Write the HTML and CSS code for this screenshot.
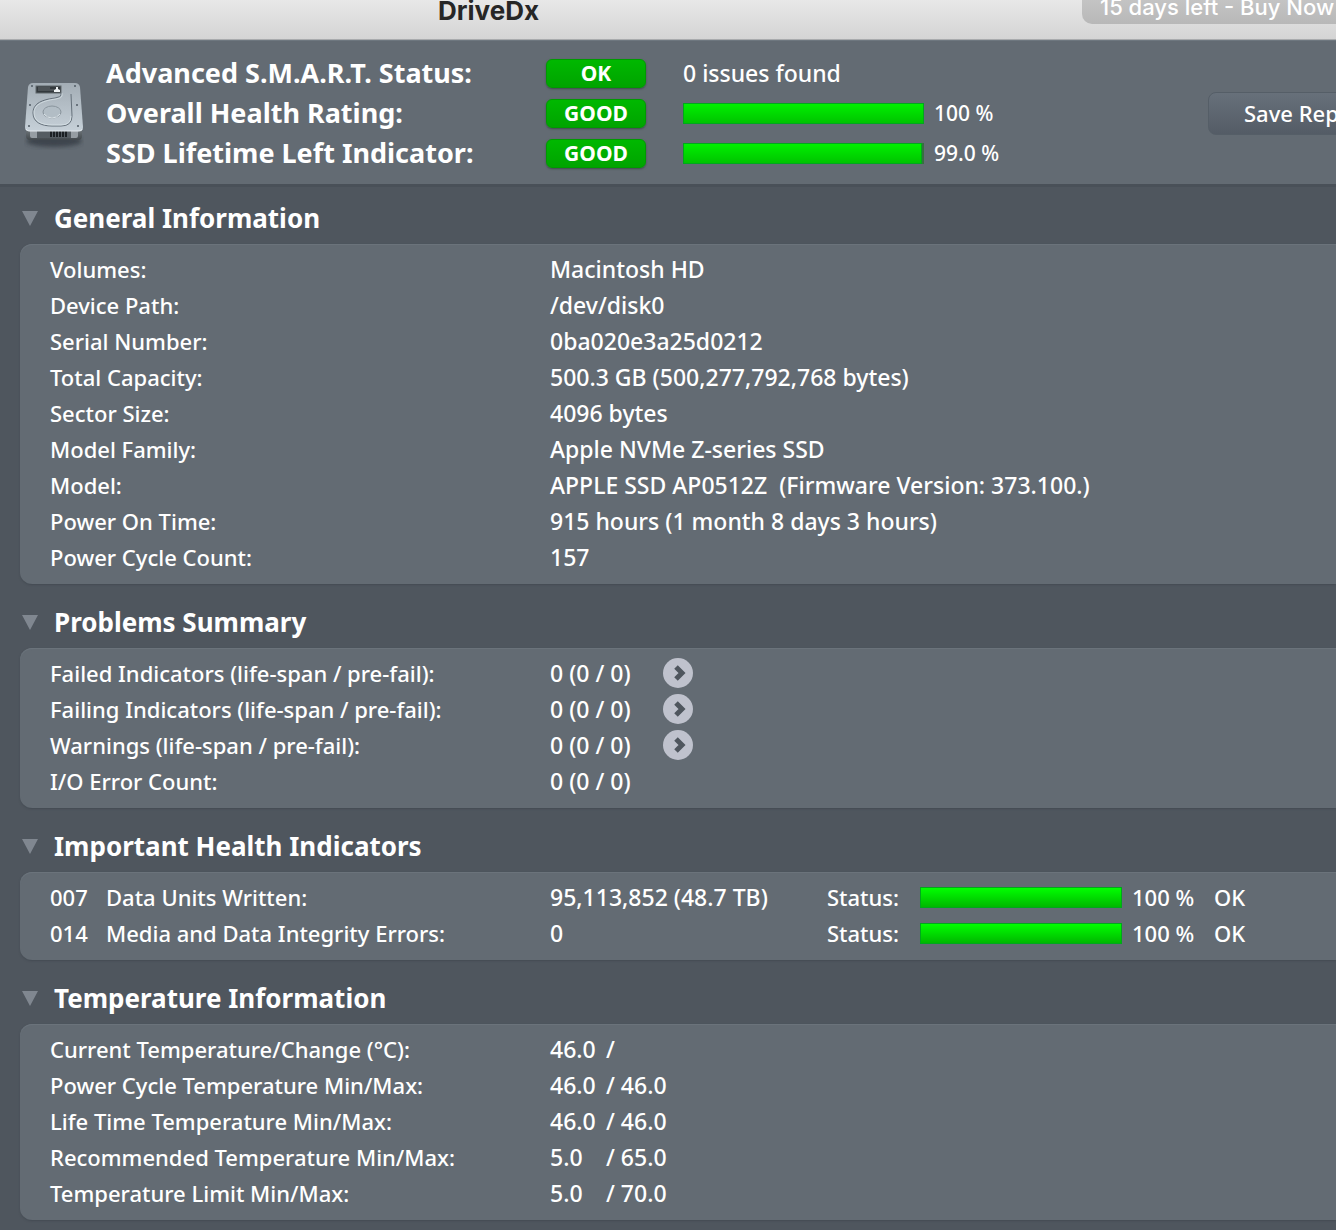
FILE: index.html
```html
<!DOCTYPE html>
<html lang="en">
<head>
  <meta charset="UTF-8" />
  <meta name="viewport" content="width=device-width, initial-scale=1.0" />
  <title>DriveDx</title>
  <link rel="stylesheet" href="styles.css">
</head>
<body>
  <header class="titlebar">
    <h1 class="app-title">DriveDx</h1>
    <a href="#buy" class="trial">15 days left - Buy Now</a>
  </header>

  <div class="overview">
    <svg class="drive-icon" viewBox="0 0 60 70" aria-hidden="true">
      <defs>
        <linearGradient id="metal" x1="0" y1="0" x2="0" y2="1">
          <stop offset="0" stop-color="#a3adb5" />
          <stop offset="1" stop-color="#c6d0d8" />
        </linearGradient>
        <linearGradient id="base" x1="0" y1="0" x2="0" y2="1">
          <stop offset="0" stop-color="#7a8287" />
          <stop offset="1" stop-color="#42484c" />
        </linearGradient>
        <filter id="soft" x="-20%" y="-50%" width="140%" height="200%">
          <feGaussianBlur stdDeviation="2" />
        </filter>
      </defs>
      <ellipse cx="30" cy="61" rx="28" ry="6" fill="#2f363c" opacity="0.7" filter="url(#soft)" />
      <path d="M2 47h56v9q0 4-4 4H6q-4 0-4-4z" fill="url(#base)" />
      <path d="M6 50h7v8H8q-2 0-2-2zM47 50h7v6q0 2-2 2h-5z" fill="#969da2" />
      <rect x="13" y="51" width="34" height="7" fill="#555c61" />
      <path d="M27 51v6M30 51v6M33 51v6M36 51v6M39 51v6M42 51v6" stroke="#1c2023" stroke-width="2" />
      <path d="M9 3h42q4 0 5 4l3 40q0 4-3 4H4q-3 0-3-4L4 7q1-4 5-4z" fill="url(#metal)" />
      <path d="M2 49q1 2 3 2h50q3 0 3-2" fill="none" stroke="#e3e9ed" stroke-width="1" />
      <path d="M37 13v2q0 2-6 3C15 20 9 25 9 33c0 9 8 13 19 13h9q11 0 11-10l-1-22" fill="none" stroke="#65707a" stroke-width="1" />
      <path d="M38 13v3q0 2-6 3C16 21 10 26 10 33c0 8 8 12 18 12h9q10 0 10-9" fill="none" stroke="#dce5ea" stroke-width="1" opacity="0.7" />
      <ellipse cx="28" cy="32" rx="9" ry="6" fill="#b2bdc5" stroke="#89949c" />
      <path d="M20 34q3 4 8 4t8-4" fill="none" stroke="#dce4e9" />
      <rect x="12" y="6" width="25" height="7" fill="#33393d" stroke="#60686d" />
      <path d="M14 8h12M14 10h16" stroke="#686e72" />
      <path d="M30 12v-2l2-1V7h2v2l2 1v2z" fill="#edf1f3" />
      <g fill="#505b64">
        <circle cx="8" cy="6" r="1" /><circle cx="51" cy="6" r="1" />
        <circle cx="6" cy="25" r="1" /><circle cx="53" cy="25" r="1" />
        <circle cx="5" cy="46" r="1" /><circle cx="54" cy="46" r="1" />
      </g>
    </svg>

    <div class="ratings">
      <span class="rating-label">Advanced S.M.A.R.T. Status:</span>
      <span class="badge">OK</span>
      <span class="rating-value">0 issues found</span>

      <span class="rating-label">Overall Health Rating:</span>
      <span class="badge">GOOD</span>
      <div class="rating-value">
        <div class="bar"><div class="bar-fill" style="width: 100%"></div></div>
        <span class="percent">100 %</span>
      </div>

      <span class="rating-label">SSD Lifetime Left Indicator:</span>
      <span class="badge">GOOD</span>
      <div class="rating-value">
        <div class="bar"><div class="bar-fill" style="width: 99%"></div></div>
        <span class="percent">99.0 %</span>
      </div>
    </div>

    <button type="button" class="save-btn">Save Report</button>
  </div>

  <main>
    <details class="section" open>
      <summary><svg class="arrow" viewBox="0 0 16 15" aria-hidden="true"><path d="M0 0h16L8 15z" /></svg><h2>General Information</h2></summary>
      <table class="panel">
        <tbody>
          <tr><th scope="row">Volumes:</th><td>Macintosh HD</td></tr>
          <tr><th scope="row">Device Path:</th><td>/dev/disk0</td></tr>
          <tr><th scope="row">Serial Number:</th><td>0ba020e3a25d0212</td></tr>
          <tr><th scope="row">Total Capacity:</th><td>500.3 GB (500,277,792,768 bytes)</td></tr>
          <tr><th scope="row">Sector Size:</th><td>4096 bytes</td></tr>
          <tr><th scope="row">Model Family:</th><td>Apple NVMe Z-series SSD</td></tr>
          <tr><th scope="row">Model:</th><td>APPLE SSD AP0512Z&nbsp; (Firmware Version: 373.100.)</td></tr>
          <tr><th scope="row">Power On Time:</th><td>915 hours (1 month 8 days 3 hours)</td></tr>
          <tr><th scope="row">Power Cycle Count:</th><td>157</td></tr>
        </tbody>
      </table>
    </details>

    <details class="section" open>
      <summary><svg class="arrow" viewBox="0 0 16 15" aria-hidden="true"><path d="M0 0h16L8 15z" /></svg><h2>Problems Summary</h2></summary>
      <table class="panel">
        <tbody>
          <tr>
            <th scope="row">Failed Indicators (life-span / pre-fail):</th>
            <td><span class="count">0 (0 / 0)</span><button type="button" class="go-btn" aria-label="Show failed indicators"><svg viewBox="0 0 30 30"><path d="M13 9l6 6-6 6" /></svg></button></td>
          </tr>
          <tr>
            <th scope="row">Failing Indicators (life-span / pre-fail):</th>
            <td><span class="count">0 (0 / 0)</span><button type="button" class="go-btn" aria-label="Show failing indicators"><svg viewBox="0 0 30 30"><path d="M13 9l6 6-6 6" /></svg></button></td>
          </tr>
          <tr>
            <th scope="row">Warnings (life-span / pre-fail):</th>
            <td><span class="count">0 (0 / 0)</span><button type="button" class="go-btn" aria-label="Show warnings"><svg viewBox="0 0 30 30"><path d="M13 9l6 6-6 6" /></svg></button></td>
          </tr>
          <tr><th scope="row">I/O Error Count:</th><td><span class="count">0 (0 / 0)</span></td></tr>
        </tbody>
      </table>
    </details>

    <details class="section" open>
      <summary><svg class="arrow" viewBox="0 0 16 15" aria-hidden="true"><path d="M0 0h16L8 15z" /></svg><h2>Important Health Indicators</h2></summary>
      <table class="panel">
        <tbody>
          <tr>
            <th scope="row"><span class="code">007</span>Data Units Written:</th>
            <td>
              <span class="raw">95,113,852 (48.7 TB)</span>
              <span class="status">Status:</span>
              <div class="bar bar-small"><div class="bar-fill" style="width: 100%"></div></div>
              <span class="health">100 %</span>
              <span class="verdict">OK</span>
            </td>
          </tr>
          <tr>
            <th scope="row"><span class="code">014</span>Media and Data Integrity Errors:</th>
            <td>
              <span class="raw">0</span>
              <span class="status">Status:</span>
              <div class="bar bar-small"><div class="bar-fill" style="width: 100%"></div></div>
              <span class="health">100 %</span>
              <span class="verdict">OK</span>
            </td>
          </tr>
        </tbody>
      </table>
    </details>

    <details class="section" open>
      <summary><svg class="arrow" viewBox="0 0 16 15" aria-hidden="true"><path d="M0 0h16L8 15z" /></svg><h2>Temperature Information</h2></summary>
      <table class="panel">
        <tbody>
          <tr><th scope="row">Current Temperature/Change (°C):</th><td><span class="temp">46.0</span>/</td></tr>
          <tr><th scope="row">Power Cycle Temperature Min/Max:</th><td><span class="temp">46.0</span>/ 46.0</td></tr>
          <tr><th scope="row">Life Time Temperature Min/Max:</th><td><span class="temp">46.0</span>/ 46.0</td></tr>
          <tr><th scope="row">Recommended Temperature Min/Max:</th><td><span class="temp">5.0</span>/ 65.0</td></tr>
          <tr><th scope="row">Temperature Limit Min/Max:</th><td><span class="temp">5.0</span>/ 70.0</td></tr>
        </tbody>
      </table>
    </details>
  </main>
</body>
</html>
```

FILE: styles.css
```css
* {
  box-sizing: border-box;
  margin: 0;
  padding: 0;
}

body {
  background: #4f565e;
  color: #ffffff;
  font-family: 'Noto Sans', 'Open Sans', sans-serif;
  font-size: 22px;
  font-weight: 500;
  line-height: 36px;
  white-space: nowrap;
  overflow-x: hidden;
}

.titlebar {
  display: flex;
  justify-content: space-between;
  align-items: flex-start;
  height: 40px;
  padding-left: 438px;
  overflow: hidden;
  background: linear-gradient(#e8e8e8, #d4d4d4);
  border-bottom: 1px solid #a9abad;
}

.app-title {
  font-family: 'Inter', sans-serif;
  font-size: 26px;
  font-weight: 700;
  line-height: 22px;
  color: #262626;
}

.trial {
  flex: 0 0 254px;
  height: 24px;
  padding-left: 18px;
  border-radius: 0 0 0 10px;
  background: linear-gradient(#c4c4c4, #b8b8b8);
  font-family: 'Inter', sans-serif;
  font-size: 22px;
  line-height: 14px;
  color: #ffffff;
  text-decoration: none;
}

.overview {
  display: flex;
  align-items: center;
  height: 147px;
  padding: 1px 0 0 24px;
  overflow: hidden;
  background: #636b73;
  border-top: 1px solid #6e777f;
  border-bottom: 3px solid #495058;
}

.drive-icon {
  flex: none;
  width: 60px;
  height: 70px;
  margin: 4px 22px 0 0;
}

.ratings {
  display: grid;
  grid-template-columns: 440px 100px auto;
  grid-auto-rows: 40px;
  align-items: center;
}

.rating-label {
  font-size: 27px;
  font-weight: 700;
}

.badge {
  height: 29px;
  border: 1px solid #009a00;
  border-radius: 6px;
  background: linear-gradient(#00b800, #00a400);
  box-shadow: 0 1px 2px #3c4e48;
  font-size: 21px;
  font-weight: 700;
  line-height: 27px;
  text-align: center;
}

.rating-value {
  display: flex;
  align-items: center;
  padding-left: 37px;
  font-size: 23px;
}

.percent {
  margin-left: 10px;
  font-size: 21px;
}

.bar {
  flex: none;
  width: 241px;
  height: 21px;
  background: #35713f;
}

.bar-fill {
  height: 100%;
  border: 1px solid #00a81c;
  background: linear-gradient(#00f000, #00c400);
}

.bar-small {
  width: 202px;
}

.bar-small .bar-fill {
  background: linear-gradient(#00ff00, #00b800);
}

.save-btn {
  flex: none;
  width: 200px;
  height: 43px;
  margin-left: auto;
  margin-right: -72px;
  padding-left: 35px;
  border: 1px solid #555e67;
  border-radius: 8px;
  background: linear-gradient(#67707a, #545c66);
  color: #ffffff;
  font: inherit;
  text-align: left;
  cursor: pointer;
}

main {
  padding: 5px 0 10px 20px;
}

.section + .section {
  margin-top: 12px;
}

summary {
  display: flex;
  align-items: center;
  height: 52px;
  list-style: none;
  cursor: pointer;
}

.arrow {
  width: 16px;
  height: 15px;
  margin: 0 16px 0 2px;
  fill: #808790;
}

.section:not([open]) .arrow {
  transform: rotate(-90deg);
}

h2 {
  font-size: 26px;
  font-weight: 700;
}

.panel {
  display: block;
  padding: 7px 0 9px 30px;
  border-radius: 12px 0 0 12px;
  background: #636b73;
  box-shadow: inset 0 1px 1px #6c757d, 0 1px 2px #444b53;
}

.panel tbody {
  display: block;
}

.panel tr {
  display: flex;
  height: 36px;
}

.panel th {
  flex: 0 0 500px;
  font-weight: 500;
  text-align: left;
}

.panel td {
  display: flex;
  align-items: center;
  font-size: 23px;
}

.code {
  display: inline-block;
  width: 56px;
}

.count {
  width: 113px;
}

.go-btn {
  width: 30px;
  height: 30px;
  border: none;
  border-radius: 50%;
  background: #bfc2cd;
  cursor: pointer;
}

.go-btn svg {
  display: block;
  fill: none;
  stroke: #4f565e;
  stroke-width: 5;
}

.raw {
  width: 277px;
}

.status,
.health,
.verdict {
  font-size: 22px;
}

.status {
  width: 93px;
}

.health {
  width: 92px;
  padding-left: 10px;
}

.temp {
  width: 56px;
}
```
